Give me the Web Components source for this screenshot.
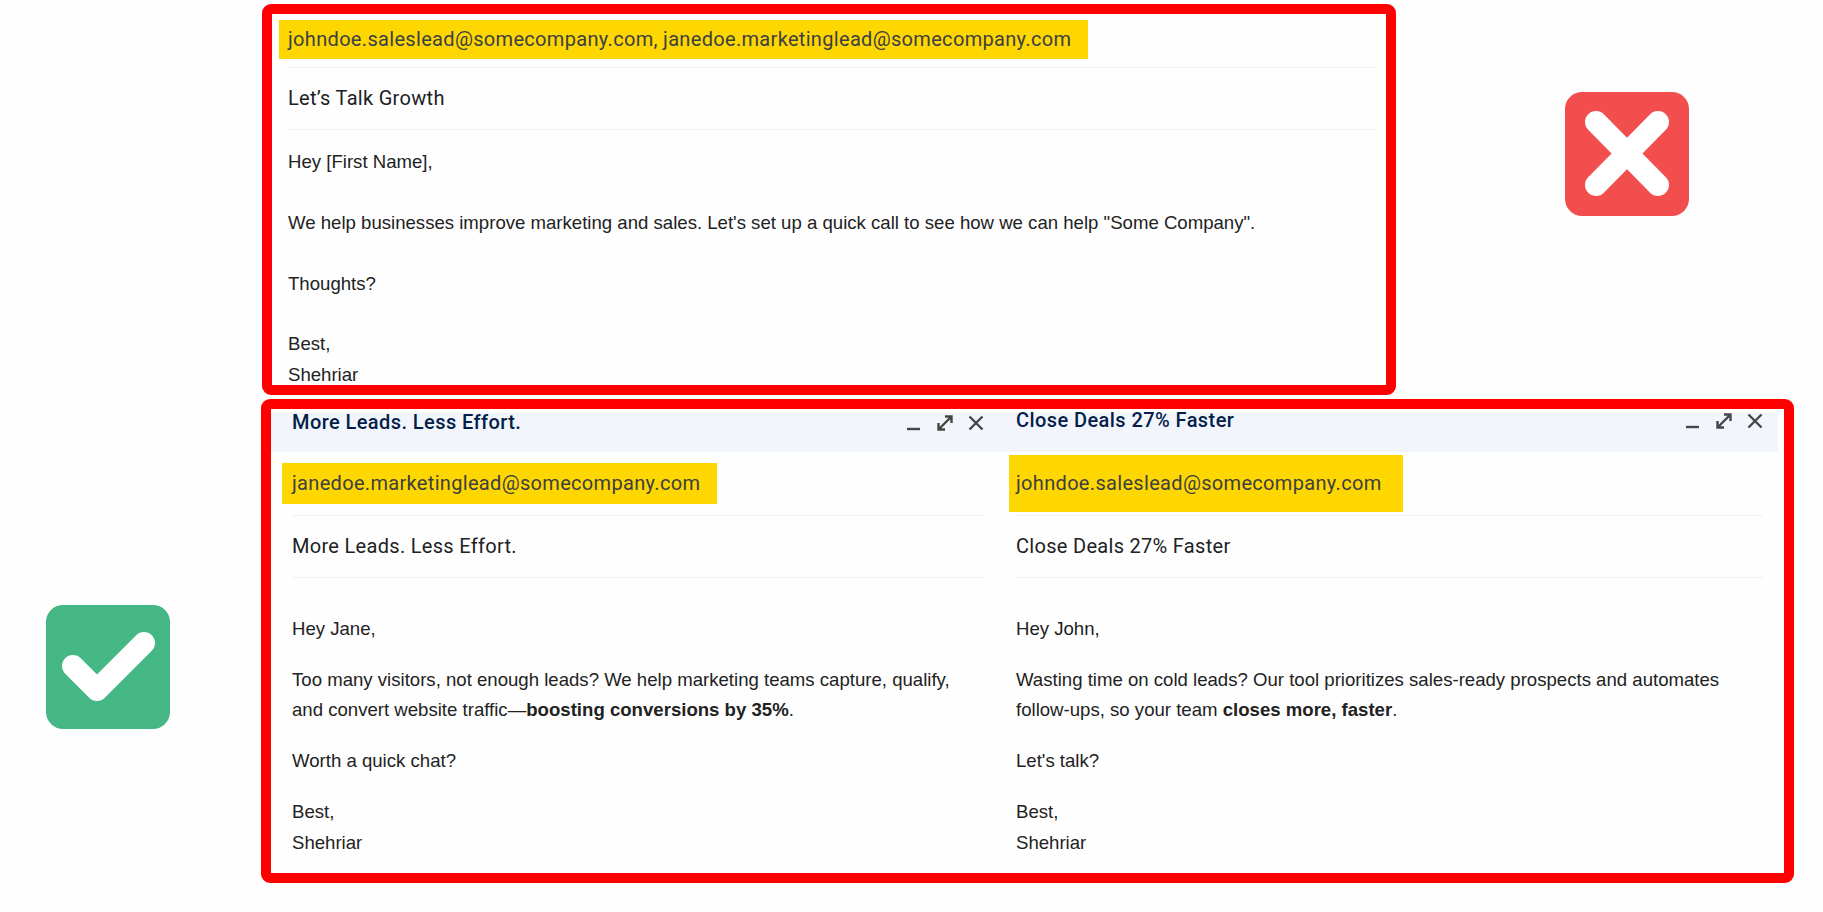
<!DOCTYPE html>
<html>
<head>
<meta charset="utf-8">
<title>Email comparison</title>
<style>
    html, body { margin: 0; background: #fefefe; }
</style>
</head>
<body>
<compare-page>
    <mail-frame style="--frame-left: 1px; --frame-width: 1134px;">
        <mail-draft style="--draft-left: 16px; --draft-right: 9px;">
            <mail-address style="--top: 6px; --row: 47px; --mark-h: 39px; --mark-l: 9px; --mark-r: 17px;">johndoe.saleslead@somecompany.com, janedoe.marketinglead@somecompany.com</mail-address>
            <mail-subject style="--row: 61px;">Let’s Talk Growth</mail-subject>
            <mail-body style="--pad: 17px; --gap: 30.4px; --line: 30.4px;">
                <p>Hey [First Name],</p>
                <p>We help businesses improve marketing and sales. Let's set up a quick call to see how we can help "Some Company".</p>
                <p>Thoughts?</p>
                <p>Best,<br>Shehriar</p>
            </mail-body>
        </mail-draft>
    </mail-frame>
    <status-icon kind="bad" slot="bad"></status-icon>
    <status-icon kind="good" slot="good"></status-icon>
    <mail-frame slot="wide" style="--frame-left: 0px; --frame-width: 1533px;">
        <compose-pair>
            <mail-draft style="--draft-left: 21px; --draft-right: 16px; width: 729px;">
                <compose-bar style="--bar-left: 21px; --bar-right: 16px;">More Leads. Less Effort.</compose-bar>
                <mail-address style="--top: 11px; --row: 52px; --mark-h: 41px; --mark-l: 10px; --mark-r: 17px;">janedoe.marketinglead@somecompany.com</mail-address>
                <mail-subject style="--row: 61px;">More Leads. Less Effort.</mail-subject>
                <mail-body style="--pad: 36px; --gap: 20px; --line: 30.7px;">
                    <p>Hey Jane,</p>
                    <p>Too many visitors, not enough leads? We help marketing teams capture, qualify, and convert website traffic—<b>boosting conversions by 35%</b>.</p>
                    <p>Worth a quick chat?</p>
                    <p>Best,<br>Shehriar</p>
                </mail-body>
            </mail-draft>
            <mail-draft style="--draft-left: 16px; --draft-right: 15px; flex: 1;">
                <compose-bar style="--bar-left: 16px; --bar-right: 15px; --bar-shift: -2px;">Close Deals 27% Faster</compose-bar>
                <mail-address style="--top: 3px; --row: 60px; --mark-h: 57px; --mark-l: 7px; --mark-r: 21px;">johndoe.saleslead@somecompany.com</mail-address>
                <mail-subject style="--row: 61px;">Close Deals 27% Faster</mail-subject>
                <mail-body style="--pad: 36px; --gap: 20px; --line: 30.7px;">
                    <p>Hey John,</p>
                    <p>Wasting time on cold leads? Our tool prioritizes sales-ready prospects and automates follow-ups, so your team <b>closes more, faster</b>.</p>
                    <p>Let's talk?</p>
                    <p>Best,<br>Shehriar</p>
                </mail-body>
            </mail-draft>
        </compose-pair>
    </mail-frame>
</compare-page>

<script>
// Page grid: the wrong example on top with its badge, the right one below
class ComparePage extends HTMLElement {
    constructor() {
        super();
        this.attachShadow({ mode: 'open' });
        this.shadowRoot.innerHTML = `
            <style>
                :host {
                    display: grid;
                    grid-template-columns: 261px 1135px 1fr;
                    grid-template-rows: 391px 484px;
                    row-gap: 4px;
                    padding-top: 4px;
                    height: 908px;
                    width: 1823px;
                    overflow: hidden;
                }
                .top { grid-column: 2; grid-row: 1; }
                .bad { grid-column: 3; grid-row: 1; padding: 88px 0 0 169px; }
                .good { grid-column: 1; grid-row: 2; padding: 206px 0 0 46px; }
                .wide { grid-column: 2 / 4; grid-row: 2; }
            </style>
            <div class="top"><slot></slot></div>
            <div class="bad"><slot name="bad"></slot></div>
            <div class="good"><slot name="good"></slot></div>
            <div class="wide"><slot name="wide"></slot></div>
        `;
    }
}

// Thick red outline round a group of emails
class MailFrame extends HTMLElement {
    constructor() {
        super();
        this.attachShadow({ mode: 'open' });
        this.shadowRoot.innerHTML = `
            <style>
                :host {
                    display: block;
                    box-sizing: border-box;
                    height: 100%;
                    width: var(--frame-width);
                    margin-left: var(--frame-left);
                    border: 10px solid #fe0000;
                    border-radius: 9px;
                    background: #fefefe;
                    overflow: hidden;
                }
            </style>
            <slot></slot>
        `;
    }
}

class ComposePair extends HTMLElement {
    constructor() {
        super();
        this.attachShadow({ mode: 'open' });
        this.shadowRoot.innerHTML = `
            <style>
                :host {
                    display: flex;
                    height: 100%;
                    padding-top: 4px;
                    padding-right: 6px;
                    box-sizing: border-box;
                }
            </style>
            <slot></slot>
        `;
    }
}

class MailDraft extends HTMLElement {
    constructor() {
        super();
        this.attachShadow({ mode: 'open' });
        this.shadowRoot.innerHTML = `
            <style>
                :host { display: block; box-sizing: border-box; min-width: 0; }
            </style>
            <slot></slot>
        `;
    }
}

class ComposeBar extends HTMLElement {
    constructor() {
        super();
        this.attachShadow({ mode: 'open' });
        this.shadowRoot.innerHTML = `
            <style>
                :host {
                    display: flex;
                    align-items: flex-start;
                    justify-content: space-between;
                    height: 39px;
                    padding: 0 var(--bar-right) 0 var(--bar-left);
                    background: #f2f6fc;
                }
                .title {
                    font: 500 20px/1 Roboto, sans-serif;
                    letter-spacing: 0.42px;
                    color: #041e49;
                    padding-top: calc(-1px + 0px);
                    margin-top: var(--bar-shift, 0px);
                    line-height: 19px;
                    height: 19px;
                }
                .tools { display: flex; gap: 15px; padding-top: 2px; margin-top: var(--bar-shift, 0px); }
                svg { display: block; width: 16px; height: 16px; fill: none; stroke: #444746; stroke-width: 2.4; }
            </style>
            <span class="title"><slot></slot></span>
            <span class="tools">
                <svg viewBox="0 0 16 16"><path d="M1 14h13"/></svg>
                <svg viewBox="0 0 16 16"><path d="M2 14 14 2M8 1.5h6.5V8M1.5 8v6.5H8"/></svg>
                <svg viewBox="0 0 16 16"><path d="M1.5 1.5l13 13M14.5 1.5l-13 13"/></svg>
            </span>
        `;
    }
}

// Recipient line; the yellow mark runs a bit past the text on both sides
class MailAddress extends HTMLElement {
    constructor() {
        super();
        this.attachShadow({ mode: 'open' });
        this.shadowRoot.innerHTML = `
            <style>
                :host {
                    display: block;
                    margin: 0 var(--draft-right) 0 var(--draft-left);
                    padding-top: var(--top);
                    height: var(--row);
                    border-bottom: 1px solid #f0f1f1;
                }
                mark {
                    display: inline-block;
                    height: var(--mark-h);
                    line-height: var(--mark-h);
                    margin-left: calc(-1 * var(--mark-l));
                    padding: 0 var(--mark-r) 0 var(--mark-l);
                    background: #ffd700;
                    color: #3c4043;
                    font: 400 20px/var(--mark-h) Roboto, sans-serif;
                    letter-spacing: 0.32px;
                    white-space: nowrap;
                }
            </style>
            <mark><slot></slot></mark>
        `;
    }
}

class MailSubject extends HTMLElement {
    constructor() {
        super();
        this.attachShadow({ mode: 'open' });
        this.shadowRoot.innerHTML = `
            <style>
                :host {
                    display: block;
                    margin: 0 var(--draft-right) 0 var(--draft-left);
                    height: var(--row);
                    line-height: var(--row);
                    border-bottom: 1px solid #f0f1f1;
                    font: 400 20px/var(--row) Roboto, sans-serif;
                    letter-spacing: 0.3px;
                    color: #202124;
                    box-sizing: content-box;
                }
            </style>
            <slot></slot>
        `;
    }
}

class MailBody extends HTMLElement {
    constructor() {
        super();
        this.attachShadow({ mode: 'open' });
        this.shadowRoot.innerHTML = `
            <style>
                :host {
                    display: block;
                    margin: 0 var(--draft-right) 0 var(--draft-left);
                    padding-top: var(--pad);
                    font: 400 18.6px/var(--line) "Liberation Sans", Arial, sans-serif;
                    color: #222222;
                }
                ::slotted(p) { margin: 0 0 var(--gap) 0; }
            </style>
            <slot></slot>
        `;
    }
}

// Red cross / green tick badges
class StatusIcon extends HTMLElement {
    constructor() {
        super();
        this.attachShadow({ mode: 'open' });
    }

    connectedCallback() {
        const bad = this.getAttribute('kind') === 'bad';
        this.shadowRoot.innerHTML = `
            <style>
                :host { display: block; width: 124px; height: 124px; }
                svg { display: block; }
            </style>
            <svg width="124" height="124" viewBox="0 0 124 124">
                <rect width="124" height="124" rx="17" fill="${bad ? '#f34e4e' : '#45b785'}"/>
                <path d="${bad ? 'M31 30 93 93M93 30 31 93' : 'M27 61 51 85 98 38'}" fill="none" stroke="#fff" stroke-width="${bad ? 22 : 22}" stroke-linecap="round" stroke-linejoin="round"/>
            </svg>
        `;
    }
}

customElements.define('compare-page', ComparePage);
customElements.define('mail-frame', MailFrame);
customElements.define('compose-pair', ComposePair);
customElements.define('mail-draft', MailDraft);
customElements.define('compose-bar', ComposeBar);
customElements.define('mail-address', MailAddress);
customElements.define('mail-subject', MailSubject);
customElements.define('mail-body', MailBody);
customElements.define('status-icon', StatusIcon);
</script>
</body>
</html>
